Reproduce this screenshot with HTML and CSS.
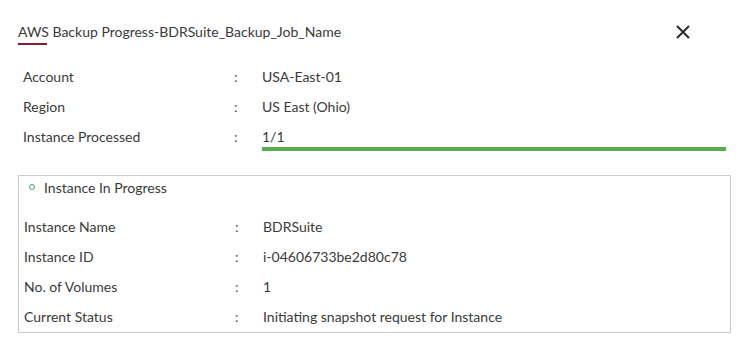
FILE: index.html
```html
<!DOCTYPE html>
<html lang="en">

<head>
  <meta charset="UTF-8">
  <meta name="viewport" content="width=device-width, initial-scale=1.0">
  <title>AWS Backup Progress</title>

  <link rel="stylesheet" href="styles.css">
</head>

<body>
  <div id="dialog">
    <div class="header">
      <h1 class="title">AWS Backup Progress-BDRSuite_Backup_Job_Name</h1>
      <button class="close" aria-label="Close">
        <svg width="14" height="14" viewBox="0 0 14 14">
          <path d="M1 1L13 13M13 1L1 13" stroke="#2b2b2b" stroke-width="2" fill="none" />
        </svg>
      </button>
    </div>

    <div class="details">
      <div class="row">
        <span class="label">Account</span>
        <span class="colon">:</span>
        <span class="value">USA-East-01</span>
      </div>
      <div class="row">
        <span class="label">Region</span>
        <span class="colon">:</span>
        <span class="value">US East (Ohio)</span>
      </div>
      <div class="row">
        <span class="label">Instance Processed</span>
        <span class="colon">:</span>
        <span class="value progress-value">
          1/1
          <span class="progress"><span class="progress-bar" style="width: 100%"></span></span>
        </span>
      </div>
    </div>

    <fieldset class="instance-box">
      <div class="box-title">
        <span class="status-dot"></span>
        Instance In Progress
      </div>
      <div class="row">
        <span class="label">Instance Name</span>
        <span class="colon">:</span>
        <span class="value">BDRSuite</span>
      </div>
      <div class="row">
        <span class="label">Instance ID</span>
        <span class="colon">:</span>
        <span class="value">i-04606733be2d80c78</span>
      </div>
      <div class="row">
        <span class="label">No. of Volumes</span>
        <span class="colon">:</span>
        <span class="value">1</span>
      </div>
      <div class="row">
        <span class="label">Current Status</span>
        <span class="colon">:</span>
        <span class="value">Initiating snapshot request for Instance</span>
      </div>
    </fieldset>
  </div>
</body>

</html>
```

FILE: styles.css
```css
body {
  background: #fff;
  color: #3a3a3a;
  font-family: Lato, "Liberation Sans", sans-serif;
  font-size: 14px;
  margin: 0;
}

#dialog {
  padding: 0 20px 0 18px;
}

.header {
  align-items: center;
  display: flex;
  height: 60px;
  justify-content: space-between;
  padding-top: 1px;
}

.title {
  font-size: 14px;
  font-weight: normal;
  margin: 0;
  position: relative;
}

.title::after {
  background: #8b1c2c;
  bottom: -5px;
  content: "";
  height: 2px;
  left: 0;
  position: absolute;
  width: 29px;
}

.close {
  background: none;
  border: 0;
  cursor: pointer;
  display: flex;
  margin-right: 36px;
  margin-top: 1px;
  padding: 0;
}

.details {
  padding-left: 5px;
}

.row {
  align-items: center;
  display: grid;
  grid-template-columns: 211px 28px 1fr;
  height: 30px;
}

.colon {
  color: #555;
}

.progress-value {
  position: relative;
}

.progress {
  background: #e6e6e6;
  height: 4px;
  left: 0;
  position: absolute;
  right: 0;
  top: 19px;
}

.progress-bar {
  background: #5aad4e;
  display: block;
  height: 100%;
}

.instance-box {
  border: 1px solid #ccc;
  margin: 24px -5px 0 0;
  min-width: 0;
  padding: 0 0 1px 5px;
}

.box-title {
  align-items: center;
  display: flex;
  height: 22px;
  margin-bottom: 13px;
}

.status-dot {
  border: 1px solid #3aa37a;
  border-radius: 50%;
  box-sizing: border-box;
  height: 6px;
  margin: 0 9px 0 5px;
  width: 6px;
}
```
